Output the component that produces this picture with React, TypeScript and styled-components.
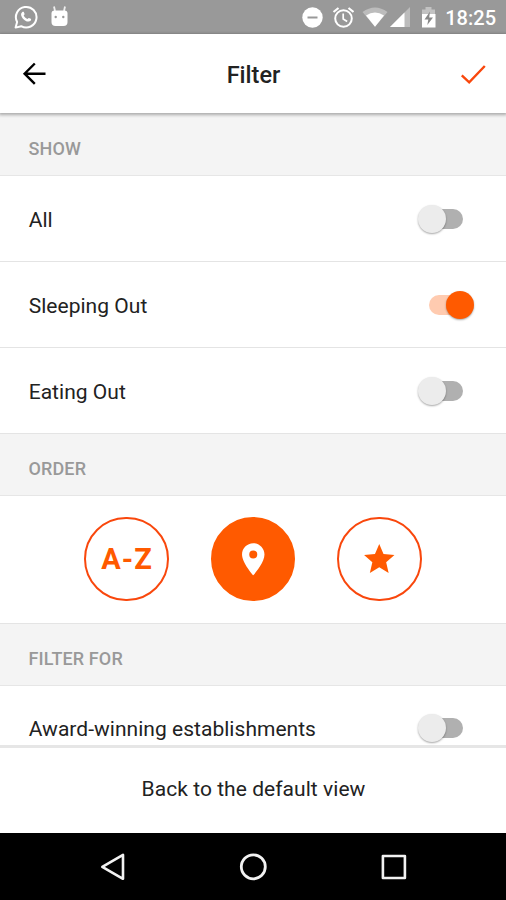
import React, { useState } from 'react';
import styled, { createGlobalStyle, css } from 'styled-components';

const ORANGE = '#ff5a00';
const ORANGE_LINE = '#f9470c';

const GlobalStyle = createGlobalStyle`
  * { box-sizing: border-box; }
  body { margin: 0; background: #fff; font-family: Roboto, "Liberation Sans", sans-serif; }
  svg { display: block; flex: none; }
  button { font: inherit; border: 0; padding: 0; background: none; color: inherit; cursor: pointer; }
`;

const Screen = styled.div`
  width: 506px;
  height: 900px;
  display: flex;
  flex-direction: column;
  overflow: hidden;
  background: #fff;
`;

const StatusBar = styled.div`
  flex: none;
  height: 34px;
  background: #999;
  display: flex;
  align-items: center;
  padding: 0 10px 0 14px;
`;

const StatusGroup = styled.div<{ $gap: number }>`
  display: flex;
  align-items: center;
  gap: ${p => p.$gap}px;
`;

const StatusRight = styled(StatusGroup)`
  margin-left: auto;
`;

const StatusIcon = styled.svg<{ $after?: number }>`
  margin-right: ${p => p.$after ?? 0}px;
`;

const Clock = styled.span`
  color: #fff;
  font-size: 20px;
  line-height: 34px;
  font-weight: 500;
  padding-top: 2px;
`;

const Header = styled.header`
  flex: none;
  position: relative;
  height: 79px;
  padding: 0 16px 0 17px;
  display: grid;
  grid-template-columns: 34px 1fr 34px;
  align-items: center;
  background: #fff;
  box-shadow: 0 1px 3px 1px rgba(0, 0, 0, 0.3);
`;

const Title = styled.h1`
  margin: 0;
  text-align: center;
  font-size: 23.5px;
  line-height: 28px;
  font-weight: 500;
  color: #222;
  padding-top: 3px;
`;

const Content = styled.main`
  flex: 1;
  min-height: 0;
  overflow: hidden;
`;

const SectionTitle = styled.h2<{ $first?: boolean }>`
  margin: 0;
  height: ${p => (p.$first ? 63 : 62)}px;
  padding: 8px 28.5px 0;
  display: flex;
  align-items: center;
  background: #f4f4f4;
  border-bottom: 1px solid #e6e6e6;
  color: #999;
  font-size: 18px;
  font-weight: 500;
  letter-spacing: 0.12px;
`;

const Row = styled.div<{ $last?: boolean }>`
  height: ${p => (p.$last ? 85 : 86)}px;
  padding: 0 31px 0 28.7px;
  display: flex;
  align-items: center;
  justify-content: space-between;
  border-bottom: 1px solid #e4e4e4;
  color: #222;
  font-size: 21px;
  letter-spacing: 0.03px;
`;

const RowLabel = styled.span<{ $last?: boolean }>`
  padding-top: ${p => (p.$last ? 1 : 2)}px;
`;

const Track = styled.button<{ $on: boolean }>`
  width: 34px;
  height: 20px;
  margin: 0 12px 0 0;
  border-radius: 10px;
  background: #b0b0b0;
  display: flex;
  align-items: center;
  ${p => p.$on && css`
    background: #ffcbb0;
    justify-content: flex-end;
  `}
`;

const Thumb = styled.span<{ $on: boolean }>`
  flex: none;
  width: 28px;
  height: 28px;
  border-radius: 50%;
  margin: ${p => (p.$on ? '0 -11px 0 0' : '0 0 0 -11px')};
  background: ${p => (p.$on ? ORANGE : '#ececec')};
  box-shadow: 0 1px 2px rgba(0, 0, 0, 0.35);
`;

const OrderBar = styled.div`
  height: 128px;
  padding-bottom: 1px;
  display: flex;
  justify-content: center;
  align-items: center;
  gap: 42px;
  border-bottom: 1px solid #e4e4e4;
`;

const OrderButton = styled.button<{ $active: boolean }>`
  width: 84.5px;
  height: 84.5px;
  border-radius: 50%;
  border: 2px solid ${p => (p.$active ? ORANGE : ORANGE_LINE)};
  background: ${p => (p.$active ? ORANGE : '#fff')};
  color: ${p => (p.$active ? '#fff' : ORANGE)};
  display: flex;
  align-items: center;
  justify-content: center;
`;

const Letters = styled.span`
  font-size: 29px;
  line-height: 32px;
  font-weight: 700;
  letter-spacing: 1px;
  padding-left: 1px;
`;

const Footer = styled.button`
  && {
    flex: none;
    height: 88px;
    padding-bottom: 4px;
    padding-left: 1px;
    border-top: 3px solid #e6e6e6;
    background: #fff;
    color: #222;
    font-size: 21px;
    letter-spacing: 0.05px;
  }
`;

const NavBar = styled.nav`
  flex: none;
  height: 67px;
  background: #000;
  display: flex;
  align-items: center;
  justify-content: center;
  gap: 110px;
`;

function Toggle({ initial = false, label }: { initial?: boolean; label: string }) {
  const [on, setOn] = useState(initial);
  return (
    <Track $on={on} role="switch" aria-checked={on} aria-label={label} onClick={() => setOn(!on)}>
      <Thumb $on={on} />
    </Track>
  );
}

function ToggleRow({ label, initial, last }: { label: string; initial?: boolean; last?: boolean }) {
  return (
    <Row $last={last}>
      <RowLabel $last={last}>{label}</RowLabel>
      <Toggle label={label} initial={initial} />
    </Row>
  );
}

export default function App() {
  const [order, setOrder] = useState('place');
  return (
    <>
      <GlobalStyle />
      <Screen>
        <StatusBar>
          <StatusGroup $gap={12}>
            <svg width="24" height="24" viewBox="0 0 24 24">
              <path d="M1.600 22.600l1.500-5.600A10.300 10.300 0 1 1 7.200 21.200z" fill="none" stroke="#fff" strokeWidth="2" strokeLinejoin="round" />
              <path d="M8.300 7c.5-.5 1.200-.5 1.500.1l.8 1.900c.1.500-.8 1.100-.9 1.500.6 1.500 2 2.800 3.600 3.400.6 0 1.100-1.200 1.600-1l1.900.9c.6.400.3 1.500-.2 2-1.300 1.300-3.500.9-5.600-.4-1.700-1.100-3-2.500-3.600-4.300-.6-1.600-.4-3 .9-4.100z" fill="#fff" />
            </svg>
            <svg width="19" height="22" viewBox="0 0 19 22">
              <path d="M4 .5l1 4.500M15 .5l-1 4.500" stroke="#eee" strokeWidth="1.800" />
              <path d="M4.500 4.500h10q3 0 3 3V16q0 4-4 4h-8q-4 0-4-4V7.500q0-3 3-3z" fill="#fff" />
              <circle cx="5.700" cy="11" r="1.200" fill="#999" />
              <circle cx="13.300" cy="11" r="1.200" fill="#999" />
            </svg>
          </StatusGroup>
          <StatusRight $gap={0}>
            <StatusIcon $after={9} width="22" height="22" viewBox="0 0 22 22">
              <circle cx="11.500" cy="11.500" r="10.200" fill="#fff" />
              <path d="M6.500 11.500h10" stroke="#999" strokeWidth="2" />
            </StatusIcon>
            <StatusIcon $after={8} width="22" height="22" viewBox="0 0 22 22" fill="none" stroke="#fff">
              <circle cx="11.500" cy="12.500" r="8.300" strokeWidth="2" />
              <path d="M1.500 6L6.500 2M21.500 6L16.500 2" strokeWidth="2.200" />
              <path d="M11.200 7.500V13l4 2.500" strokeWidth="1.700" />
            </StatusIcon>
            <StatusIcon $after={2} width="26" height="20" viewBox="0 0 26 20">
              <path d="M.5 5Q13-4 25.500 5L13 19.800z" fill="#fff" opacity=".35" />
              <path d="M4 8.500Q13 2.700 22 8.500L13 19.800z" fill="#fff" />
            </StatusIcon>
            <StatusIcon $after={11} width="20" height="20" viewBox="0 0 20 20">
              <path d="M0 20L20 0v20z" fill="#fff" opacity=".35" />
              <path d="M0 20L14.500 5.500V20z" fill="#fff" />
            </StatusIcon>
            <StatusIcon $after={9} width="15" height="22" viewBox="0 0 15 22">
              <path d="M4.500 1h6v2.500h3.500V11H1V3.500h3.500z" fill="#fff" opacity=".4" />
              <path d="M1 8h13.500v13.500H1z" fill="#fff" />
              <path d="M9 5.500L3.500 13.500h3.800l-1 5.500 5.700-7.500H8.200z" fill="#888" />
            </StatusIcon>
            <Clock>18:25</Clock>
          </StatusRight>
        </StatusBar>

        <Header>
          <button aria-label="Back">
            <svg width="34" height="34" viewBox="0 0 34 34" fill="none" stroke="#000" strokeWidth="2.400">
              <path d="M28.500 16.700H7.600M17.800 6.500L7.600 16.700l10.200 10.200" />
            </svg>
          </button>
          <Title>Filter</Title>
          <button aria-label="Apply">
            <svg width="34" height="34" viewBox="0 0 34 34" fill="none" stroke={ORANGE_LINE} strokeWidth="2.400">
              <path d="M5.800 18.300l7.400 7L28.800 9" />
            </svg>
          </button>
        </Header>

        <Content>
          <SectionTitle $first>SHOW</SectionTitle>
          <ToggleRow label="All" />
          <ToggleRow label="Sleeping Out" initial />
          <ToggleRow label="Eating Out" />
          <SectionTitle>ORDER</SectionTitle>
          <OrderBar>
            <OrderButton $active={order === 'name'} onClick={() => setOrder('name')}>
              <Letters>A-Z</Letters>
            </OrderButton>
            <OrderButton $active={order === 'place'} onClick={() => setOrder('place')} aria-label="Distance">
              <svg width="38.500" height="38.500" viewBox="0 0 24 24" fill="currentColor">
                <path d="M12 2C8.130 2 5 5.130 5 9c0 5.250 7 13 7 13s7-7.750 7-13c0-3.870-3.130-7-7-7zm0 9.500a2.500 2.500 0 0 1 0-5 2.500 2.500 0 0 1 0 5z" />
              </svg>
            </OrderButton>
            <OrderButton $active={order === 'rating'} onClick={() => setOrder('rating')} aria-label="Rating">
              <svg width="36.500" height="36.500" viewBox="0 0 24 24" fill="currentColor">
                <path d="M12 17.270L18.180 21l-1.640-7.030L22 9.240l-7.190-.61L12 2 9.190 8.630 2 9.240l5.460 4.730L5.820 21z" />
              </svg>
            </OrderButton>
          </OrderBar>
          <SectionTitle>FILTER FOR</SectionTitle>
          <ToggleRow label="Award-winning establishments" last />
        </Content>

        <Footer>Back to the default view</Footer>

        <NavBar>
          <svg width="30" height="30" viewBox="0 0 30 30" fill="none" stroke="#f2f2f2" strokeWidth="2.600" strokeLinejoin="round">
            <path d="M4.300 14.800L25 2.800v24z" />
          </svg>
          <svg width="30" height="30" viewBox="0 0 30 30" fill="none" stroke="#f2f2f2" strokeWidth="2.800">
            <circle cx="15.300" cy="14.800" r="12" />
          </svg>
          <svg width="30" height="30" viewBox="0 0 30 30" fill="none" stroke="#f2f2f2" strokeWidth="2.600" strokeLinejoin="round">
            <path d="M4.900 4h22v22h-22z" />
          </svg>
        </NavBar>
      </Screen>
    </>
  );
}
